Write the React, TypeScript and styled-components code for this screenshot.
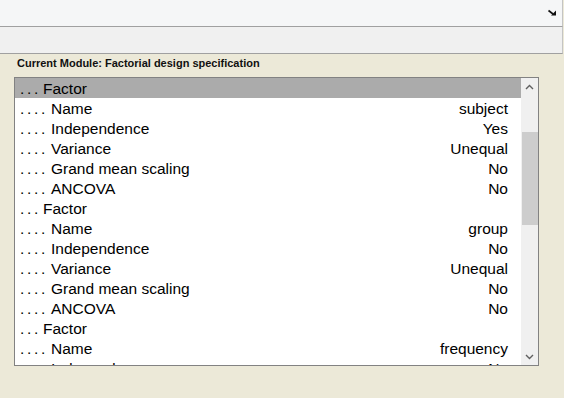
import React from 'react';
import styled, { createGlobalStyle } from 'styled-components';

const GlobalStyle = createGlobalStyle`
  html, body {
    margin: 0;
    padding: 0;
    background: #ece9d8;
    font-family: "Liberation Sans", Arial, sans-serif;
  }
`;

interface Row {
  depth: 3 | 4;
  label: string;
  value?: string;
}

const factors: [string, string, string, string, string][] = [
  ['subject', 'Yes', 'Unequal', 'No', 'No'],
  ['group', 'No', 'Unequal', 'No', 'No'],
  ['frequency', 'No', 'Unequal', 'No', 'No'],
];

const rows: Row[] = factors.flatMap(([name, indep, variance, gms, ancova]) => [
  { depth: 3, label: 'Factor' },
  { depth: 4, label: 'Name', value: name },
  { depth: 4, label: 'Independence', value: indep },
  { depth: 4, label: 'Variance', value: variance },
  { depth: 4, label: 'Grand mean scaling', value: gms },
  { depth: 4, label: 'ANCOVA', value: ancova },
]);

const Page = styled.div`
  width: 564px;
  height: 398px;
  display: flex;
  flex-direction: column;
  overflow: hidden;
`;

const TopBar = styled.div<{ $tone: string }>`
  height: 26px;
  flex: none;
  background: ${(p) => p.$tone};
  border-bottom: 1px solid #a0a0a0;
  border-right: 1px solid #c4c4c4;
  margin-right: 1px;
  display: flex;
  align-items: center;
  justify-content: flex-end;
  padding-right: 5px;
`;

const Panel = styled.div`
  flex: 1;
  padding: 3px 25px 0 14px;
  display: flex;
  flex-direction: column;
`;

const ModuleTitle = styled.div`
  font-size: 11px;
  font-weight: bold;
  color: #111;
  line-height: 13px;
  padding-left: 3px;
  margin-bottom: 7px;
`;

const ListBox = styled.div`
  height: 287px;
  border: 1px solid #828282;
  background: #fff;
  display: flex;
  overflow: hidden;
`;

const Items = styled.div`
  flex: 1;
  overflow: hidden;
`;

const Item = styled.div<{ $selected?: boolean }>`
  height: 20px;
  box-sizing: border-box;
  display: flex;
  align-items: center;
  padding: 1px 13px 0 5px;
  font-size: 15.5px;
  color: #000;
  background: ${(p) => (p.$selected ? '#ababab' : 'transparent')};
  white-space: nowrap;
`;

const Dots = styled.span<{ $count: number }>`
  letter-spacing: 2.7px;
  margin-right: ${(p) => (p.$count === 4 ? 3 : 2)}px;
`;

const Value = styled.span`
  margin-left: auto;
`;

const ScrollBar = styled.div`
  width: 17px;
  flex: none;
  background: #f0f0f0;
  display: flex;
  flex-direction: column;
`;

const ArrowBox = styled.div`
  height: 17px;
  display: flex;
  align-items: center;
  justify-content: center;
`;

const Track = styled.div`
  flex: 1;
  padding-top: 37px;
`;

const Thumb = styled.div`
  height: 93px;
  margin-left: 1px;
  background: #cdcdcd;
`;

const Chevron = ({ up }: { up?: boolean }) => (
  <svg width="9" height="6" viewBox="0 0 9 6">
    <path
      d={up ? 'M1 5 L4.5 1.5 L8 5' : 'M1 1 L4.5 4.5 L8 1'}
      fill="none"
      stroke="#606060"
      strokeWidth="1.4"
    />
  </svg>
);

const CornerIcon = () => (
  <svg width="9" height="8" viewBox="0 0 9 8">
    <path d="M0.5 1.5 L5 5" stroke="#111" strokeWidth="1.6" fill="none" />
    <path d="M3 6.5 L8 6.5 L8 1.5 Z" fill="#111" />
  </svg>
);

export default function App() {
  return (
    <Page>
      <GlobalStyle />
      <TopBar $tone="#f5f6f7">
        <CornerIcon />
      </TopBar>
      <TopBar $tone="#f0f0f0" />
      <Panel>
        <ModuleTitle>Current Module: Factorial design specification</ModuleTitle>
        <ListBox>
          <Items>
            {rows.map((r, i) => (
              <Item key={i} $selected={i === 0}>
                <Dots $count={r.depth}>{'.'.repeat(r.depth)}</Dots>
                {r.label}
                {r.value && <Value>{r.value}</Value>}
              </Item>
            ))}
          </Items>
          <ScrollBar>
            <ArrowBox>
              <Chevron up />
            </ArrowBox>
            <Track>
              <Thumb />
            </Track>
            <ArrowBox>
              <Chevron />
            </ArrowBox>
          </ScrollBar>
        </ListBox>
      </Panel>
    </Page>
  );
}
